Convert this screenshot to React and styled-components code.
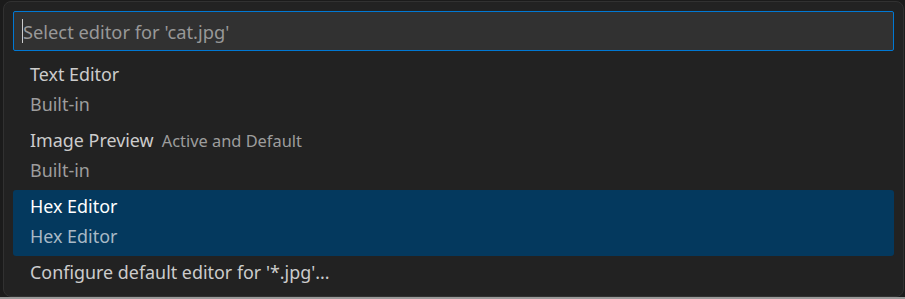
import React from 'react'
import styled, { createGlobalStyle } from 'styled-components'

const Global = createGlobalStyle`
  html, body { margin: 0; padding: 0; background: #1b1b1b; }
  body { font-family: 'Noto Sans', 'Open Sans', sans-serif; }
`

const Page = styled.div`
  width: 905px;
  height: 299px;
  padding: 1px 1px 2px 3px;
  box-sizing: border-box;
  background: linear-gradient(to bottom, #1b1b1b 0, #1b1b1b 297px, #9a9a9a 297px);
`

const Panel = styled.div`
  height: 296px;
  box-sizing: border-box;
  background: #222222;
  border: 1px solid #313131;
  border-radius: 8px;
  padding: 9px 9px 0 9px;
  display: flex;
  flex-direction: column;
  gap: 7px;
`

const Input = styled.div`
  height: 40px;
  box-sizing: border-box;
  border: 1px solid #0078d4;
  border-radius: 2px;
  background: #313131;
  display: flex;
  align-items: center;
  padding-left: 8px;
  color: #989898;
  font-size: 18.3px;
`

const Caret = styled.span`
  width: 1px;
  height: 24px;
  background: #cccccc;
  margin-right: 0;
`

const List = styled.div`
  display: flex;
  flex-direction: column;
`

const Item = styled.div`
  height: ${p => (p.$single ? 33 : 66)}px;
  box-sizing: border-box;
  padding: 1px 0 0 17px;
  border-radius: 3px;
  background: ${p => (p.$selected ? '#04395e' : 'transparent')};
  display: flex;
  flex-direction: column;
`

const Line = styled.div`
  height: 30px;
  display: flex;
  align-items: center;
  gap: 8px;
  font-size: 17.9px;
  color: ${p => (p.$sub ? (p.$selected ? '#a9b9c6' : '#9d9d9d') : p.$selected ? '#ffffff' : '#cccccc')};
  white-space: nowrap;
`

const Hint = styled.span`
  color: #9d9d9d;
  font-size: 16.4px;
`

const items = [
  { label: 'Text Editor', detail: 'Built-in' },
  { label: 'Image Preview', hint: 'Active and Default', detail: 'Built-in' },
  { label: 'Hex Editor', detail: 'Hex Editor', selected: true },
]

export default function App() {
  return (
    <>
      <Global />
      <Page>
        <Panel>
          <Input>
            <Caret />
            Select editor for 'cat.jpg'
          </Input>
          <List>
            {items.map(it => (
              <Item key={it.label} $selected={it.selected}>
                <Line $selected={it.selected}>
                  {it.label}
                  {it.hint && <Hint>{it.hint}</Hint>}
                </Line>
                <Line $sub $selected={it.selected}>{it.detail}</Line>
              </Item>
            ))}
            <Item $single>
              <Line>Configure default editor for '*.jpg'...</Line>
            </Item>
          </List>
        </Panel>
      </Page>
    </>
  )
}
